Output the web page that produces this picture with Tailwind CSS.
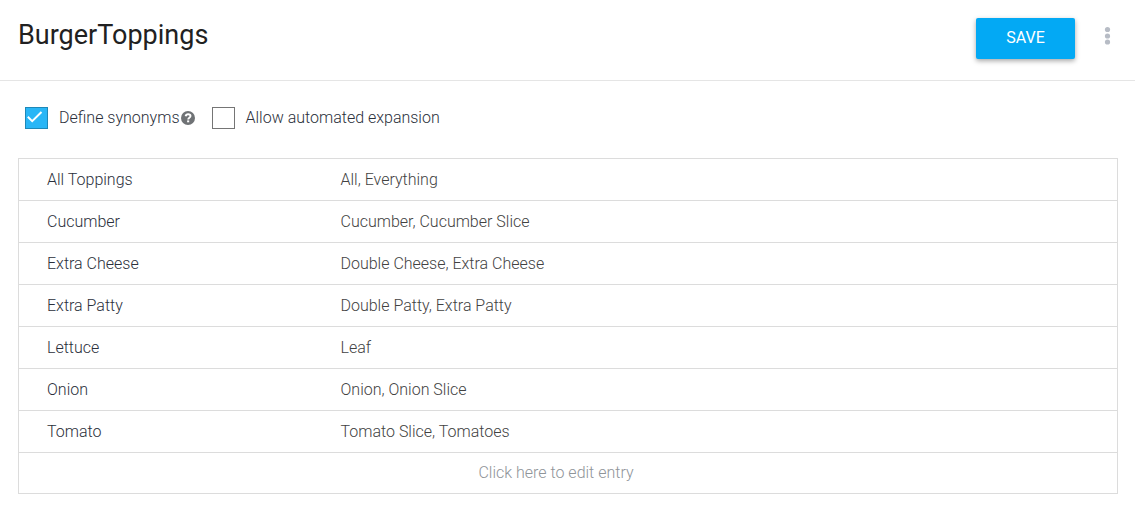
<!DOCTYPE html>
<html lang="en">
<head>
    <meta charset="UTF-8">
    <meta name="viewport" content="width=device-width, initial-scale=1.0">
    <title>BurgerToppings</title>
    <script src="https://cdn.jsdelivr.net/npm/@tailwindcss/browser@4"></script>
</head>
<body class="bg-white font-['Roboto',sans-serif] text-base text-[#2b303b]">
<header class="flex items-center justify-between h-[81px] border-b border-[#e5e5e5] px-[18px] pb-1">
    <h1 class="text-[27px] leading-8 text-[#212121] pb-1.5">BurgerToppings</h1>
    <div class="flex items-center gap-6">
        <button type="button" class="w-[99px] h-[41px] rounded-xs bg-[#03a9f4] text-white shadow-[0_2px_5px_rgba(0,0,0,0.35)]">SAVE</button>
        <button type="button" aria-label="More options" class="w-[18px] pb-1">
            <svg class="w-[18px] h-5" viewBox="0 0 18 20" fill="#b7bcc5"><circle cx="8.5" cy="3.5" r="2.6"/><circle cx="8.5" cy="10" r="2.6"/><circle cx="8.5" cy="16" r="2.6"/></svg>
        </button>
    </div>
</header>
<main class="pl-[18px] pr-[17px]">
    <div class="flex items-center h-[77px] pl-[7px] pb-1 font-light">
        <div class="grid">
            <input type="checkbox" id="synonyms" class="peer [grid-area:1/1] appearance-none w-[23px] h-[22px] border border-[#757575] checked:border-[#1e88b8] checked:bg-[#29b6f6]" checked>
            <svg class="[grid-area:1/1] w-[23px] h-[22px] pointer-events-none invisible peer-checked:visible" viewBox="0 0 23 22" fill="none" stroke="#fff" stroke-width="2"><path d="M2.8 9.8l4.4 4.4L16.5 5"/></svg>
        </div>
        <label for="synonyms" class="ml-[11px]">Define synonyms</label>
        <button type="button" aria-label="Help" class="ml-px">
            <svg class="w-[14px] h-[14px]" viewBox="0 0 14 14"><circle cx="7" cy="7" r="7" fill="#6f7275"/><path d="M4.6 5.2C4.9 3.8 5.8 3.2 7.1 3.2c1.4 0 2.4.8 2.4 1.9 0 1.7-2.3 1.6-2.3 3.3" fill="none" stroke="#fff" stroke-width="1.9"/><path d="M6.1 9.4h2.1v1.9H6.1z" fill="#fff"/></svg>
        </button>
        <input type="checkbox" id="expansion" class="appearance-none w-[23px] h-[22px] border border-[#757575] checked:bg-[#29b6f6] ml-[17px]">
        <label for="expansion" class="ml-[11px]">Allow automated expansion</label>
    </div>
    <table class="w-full table-fixed border border-[#dcdcdc] font-light">
        <tbody class="[&_td+td]:text-[#424242]">
        <tr class="h-[42px] border-b border-[#dcdcdc]"><td class="w-[294px] pl-7">All Toppings</td><td class="pl-7">All, Everything</td></tr>
        <tr class="h-[42px] border-b border-[#dcdcdc]"><td class="pl-7">Cucumber</td><td class="pl-7">Cucumber, Cucumber Slice</td></tr>
        <tr class="h-[42px] border-b border-[#dcdcdc]"><td class="pl-7">Extra Cheese</td><td class="pl-7">Double Cheese, Extra Cheese</td></tr>
        <tr class="h-[42px] border-b border-[#dcdcdc]"><td class="pl-7">Extra Patty</td><td class="pl-7">Double Patty, Extra Patty</td></tr>
        <tr class="h-[42px] border-b border-[#dcdcdc]"><td class="pl-7">Lettuce</td><td class="pl-7">Leaf</td></tr>
        <tr class="h-[42px] border-b border-[#dcdcdc]"><td class="pl-7">Onion</td><td class="pl-7">Onion, Onion Slice</td></tr>
        <tr class="h-[42px] border-b border-[#dcdcdc]"><td class="pl-7">Tomato</td><td class="pl-7">Tomato Slice, Tomatoes</td></tr>
        <tr class="h-[41px]"><td colspan="2" class="text-center pr-6 text-[#8f9499]"><button type="button">Click here to edit entry</button></td></tr>
        </tbody>
    </table>
</main>
</body>
</html>
